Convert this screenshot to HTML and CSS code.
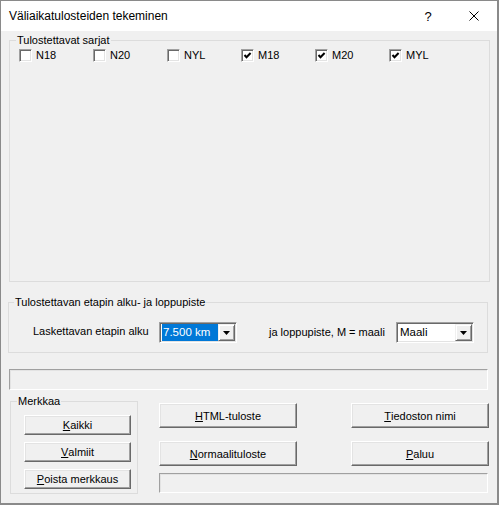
FILE: index.html
```html
<!DOCTYPE html>
<html>
<head>
<meta charset="utf-8">
<link rel="stylesheet" href="styles.css">
</head>
<body>
<div class="window">
  <div class="titlebar">
    <span class="title">Väliaikatulosteiden tekeminen</span>
    <span class="tb-btn help">?</span>
    <span class="tb-btn close"><svg width="10" height="10" viewBox="0 0 10 10"><path d="M0.5 0.5L9.5 9.5M9.5 0.5L0.5 9.5" stroke="#000" stroke-width="1" fill="none"/></svg></span>
  </div>
  <div class="client">
    <div class="group g1">
      <span class="legend">Tulostettavat sarjat</span>
      <div class="checks">
        <label class="check"><span class="box"></span><span>N18</span></label>
        <label class="check"><span class="box"></span><span>N20</span></label>
        <label class="check"><span class="box"></span><span>NYL</span></label>
        <label class="check"><span class="box"><svg width="9" height="9" viewBox="0 0 9 9"><path d="M1.5 4L3.5 6.2L7.6 2" stroke="#000" stroke-width="2" fill="none"/></svg></span><span>M18</span></label>
        <label class="check"><span class="box"><svg width="9" height="9" viewBox="0 0 9 9"><path d="M1.5 4L3.5 6.2L7.6 2" stroke="#000" stroke-width="2" fill="none"/></svg></span><span>M20</span></label>
        <label class="check"><span class="box"><svg width="9" height="9" viewBox="0 0 9 9"><path d="M1.5 4L3.5 6.2L7.6 2" stroke="#000" stroke-width="2" fill="none"/></svg></span><span>MYL</span></label>
      </div>
    </div>
    <div class="group g2">
      <span class="legend">Tulostettavan etapin alku- ja loppupiste</span>
      <div class="row">
        <span class="lbl1">Laskettavan etapin alku</span>
        <div class="combo"><span class="value selected">7.500 km</span><span class="dd"><svg width="7" height="4" viewBox="0 0 7 4"><path d="M0 0H7L3.5 4Z" fill="#000"/></svg></span></div>
        <span class="lbl2">ja loppupiste, M = maali</span>
        <div class="combo"><span class="value">Maali</span><span class="dd"><svg width="7" height="4" viewBox="0 0 7 4"><path d="M0 0H7L3.5 4Z" fill="#000"/></svg></span></div>
      </div>
    </div>
    <div class="sunken progress"></div>
    <div class="bottom">
      <div class="group g3">
        <span class="legend">Merkkaa</span>
        <div class="btncol">
          <span class="btn small"><u>K</u>aikki</span>
          <span class="btn small"><u>V</u>almiit</span>
          <span class="btn small"><u>P</u>oista merkkaus</span>
        </div>
      </div>
      <div class="actions">
        <div class="btnrow">
          <span class="btn big"><u>H</u>TML-tuloste</span>
          <span class="btn big"><u>T</u>iedoston nimi</span>
        </div>
        <div class="btnrow second">
          <span class="btn big"><u>N</u>ormaalituloste</span>
          <span class="btn big"><u>P</u>aluu</span>
        </div>
        <div class="sunken status"></div>
      </div>
    </div>
  </div>
</div>
</body>
</html>
```

FILE: styles.css
```css
* { box-sizing: border-box; }
html, body { margin: 0; padding: 0; background: #fff; }
body {
  font-family: "Liberation Sans", Arial, sans-serif;
  font-size: 11px;
  color: #000;
}
.window {
  width: 499px;
  height: 505px;
  border: 1px solid #8a8a8a;
  border-right-width: 2px;
  border-bottom-width: 2px;
  display: flex;
  flex-direction: column;
  background: #f0f0f0;
}
.titlebar {
  height: 30px;
  background: #fff;
  display: flex;
  align-items: center;
  flex: none;
}
.title {
  padding-left: 8px;
  font-size: 12px;
  flex: 1;
}
.tb-btn {
  width: 46px;
  height: 30px;
  display: flex;
  align-items: center;
  justify-content: center;
}
.help { font-size: 13px; }
.close svg { display: block; }
.client {
  flex: 1;
  background: #f0f0f0;
}
.group {
  position: relative;
  border: 1px solid #dcdcdc;
}
.legend {
  position: absolute;
  top: -7px;
  left: 6px;
  padding: 0 1px;
  line-height: 13px;
  background: #f0f0f0;
  white-space: nowrap;
}
.g1 {
  margin: 9px 0 0 8px;
  width: 481px;
  height: 242px;
}
.checks {
  display: grid;
  grid-template-columns: repeat(6, 74px);
  padding: 8px 0 0 9px;
}
.check {
  display: flex;
  align-items: center;
  gap: 4px;
  height: 13px;
  line-height: 13px;
}
.box {
  width: 13px;
  height: 13px;
  background: #fff;
  border: 1px solid;
  border-color: #a0a0a0 #fff #fff #a0a0a0;
  box-shadow: inset 1px 1px 0 #696969, inset -1px -1px 0 #e3e3e3;
  display: flex;
  align-items: center;
  justify-content: center;
  flex: none;
}
.box svg { display: block; }
.g2 {
  margin: 20px 0 0 7px;
  width: 480px;
  height: 51px;
}
.g2 .legend { left: 5px; }
.row {
  display: flex;
  align-items: center;
  padding: 19px 0 0 24px;
}
.lbl1 { width: 126px; margin-top: -3px; }
.lbl2 { width: 127px; margin-left: 32px; margin-top: -1px; }
.combo {
  width: 78px;
  height: 21px;
  background: #fff;
  border: 1px solid;
  border-color: #a0a0a0 #fff #fff #a0a0a0;
  box-shadow: inset 1px 1px 0 #696969, inset -1px -1px 0 #e3e3e3;
  padding: 1px;
  display: flex;
}
.value {
  width: 56px;
  margin-left: 1px;
  height: 17px;
  line-height: 17px;
  padding-left: 1px;
  font-size: 11.5px;
  white-space: nowrap;
}
.value.selected {
  background: #0078d7;
  color: #fff;
}
.dd {
  width: 17px;
  height: 17px;
  background: #f0f0f0;
  border: 1px solid;
  border-color: #f0f0f0 #696969 #696969 #f0f0f0;
  box-shadow: inset 1px 1px 0 #fff, inset -1px -1px 0 #a0a0a0;
  display: flex;
  align-items: center;
  justify-content: center;
}
.dd svg { display: block; }
.sunken {
  border: 1px solid;
  border-color: #a0a0a0 #fff #fff #a0a0a0;
  box-shadow: inset 1px 1px 0 #e3e3e3;
}
.progress {
  margin: 16px 0 0 8px;
  width: 479px;
  height: 21px;
}
.bottom {
  display: flex;
  align-items: flex-start;
  margin-top: 11px;
}
.g3 {
  margin-left: 9px;
  width: 128px;
  height: 93px;
}
.btncol {
  display: flex;
  flex-direction: column;
  gap: 7px;
  padding: 13px 0 0 13px;
}
.btn {
  display: flex;
  align-items: center;
  justify-content: center;
  background: #f0f0f0;
  border: 1px solid;
  border-color: #fff #696969 #696969 #fff;
  box-shadow: inset -1px -1px 0 #a0a0a0, inset 1px 1px 0 #e3e3e3;
  white-space: nowrap;
}
.btn u { text-decoration: underline; text-underline-offset: 1px; }
.btn.small { width: 107px; height: 20px; }
.btn.big { width: 138px; height: 25px; }
.actions {
  margin: 2px 0 0 21px;
  display: flex;
  flex-direction: column;
}
.btnrow {
  display: flex;
  gap: 54px;
}
.btnrow.second { margin-top: 13px; }
.status {
  margin-top: 7px;
  width: 329px;
  height: 20px;
}
```
